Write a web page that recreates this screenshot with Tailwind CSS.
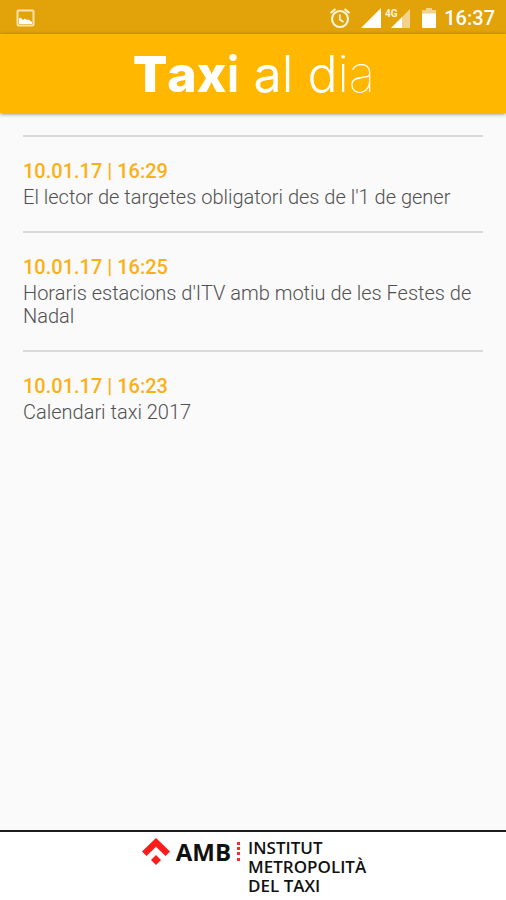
<!DOCTYPE html>
<html lang="ca">
<head>
<meta charset="utf-8">
<meta name="viewport" content="width=device-width, initial-scale=1">
<title>Taxi al dia</title>
<script src="https://cdn.jsdelivr.net/npm/@tailwindcss/browser@4"></script>
</head>
<body class="flex min-h-screen flex-col bg-[#fafafa] font-['Roboto',sans-serif] text-[#505050]">
  <div class="flex h-[34px] items-center justify-between bg-[#e1a20a] pt-px pr-[11px] pl-4 text-white">
    <svg class="h-[18px] w-[19px]" viewBox="0 0 19 18" aria-hidden="true">
      <rect x="1.5" y="1.5" width="16" height="15" rx="1" fill="none" stroke="#fbe3ae" stroke-width="2"/>
      <path d="M3 15V9.500L4.500 8.500L7 11L9 9.500L11 11L12.500 10.500L16 13V15Z" fill="#fff"/>
    </svg>
    <div class="flex items-center">
      <svg class="h-[22px] w-[22px]" viewBox="0 0 22 22" fill="none" stroke="#fff5dc" aria-hidden="true">
        <circle cx="11" cy="12" r="8" stroke-width="2.200"/>
        <path d="M1.500 6L6.500 2M20.500 6L15.500 2" stroke-width="2.200"/>
        <path d="M10.800 7.500V12.500L14.500 15" stroke-width="1.800"/>
      </svg>
      <svg class="ml-2.5 h-5 w-5" viewBox="0 0 20 20" aria-hidden="true"><path d="M0 20L20 0V20Z" fill="#fff"/></svg>
      <svg class="ml-1 h-5 w-[26px]" viewBox="0 0 26 20" aria-hidden="true">
        <path d="M17 9L25 1V20H17Z" fill="#f3d289"/>
        <path d="M6 20L17 9V20Z" fill="#fff"/>
        <text x="0" y="9" font-size="10" font-weight="700" fill="#fff5dc">4G</text>
      </svg>
      <svg class="ml-[11px] h-5 w-[14px]" viewBox="0 0 14 20" aria-hidden="true">
        <path d="M0 6V2H4V0H10V2H14V6Z" fill="#f3d289"/>
        <path d="M0 5.500H14V19Q14 20 13 20H1Q0 20 0 19Z" fill="#fff"/>
      </svg>
      <span class="ml-2 text-[20px] leading-6 font-medium">16:37</span>
    </div>
  </div>
  <header class="flex h-[79px] items-center justify-center bg-[#ffb700] pl-0.5 shadow-[0_1px_4px_rgba(0,0,0,0.45)]">
    <h1 class="font-['Inter',sans-serif] text-[50px] leading-[60px] whitespace-nowrap text-white"><span class="font-black">T</span><span class="font-extrabold">ax</span><span class="font-semibold">i</span> <span class="font-normal">a</span><span class="font-light">l</span> <span class="font-light">d</span><span class="font-extralight">i</span><span class="font-thin">a</span></h1>
  </header>
  <main class="flex-1 px-[23px] pt-[22px] text-[20px] leading-[23px] font-light">
    <article class="border-t-2 border-[#dadada] pt-[23px] pb-[22px]">
      <time class="mb-[3px] block font-medium text-[#fbb017]" datetime="2017-01-10T16:29">10.01.17 | 16:29</time>
      <p>El lector de targetes obligatori des de l'1 de gener</p>
    </article>
    <article class="border-t-2 border-[#dadada] pt-[23px] pb-[22px]">
      <time class="mb-[3px] block font-medium text-[#fbb017]" datetime="2017-01-10T16:25">10.01.17 | 16:25</time>
      <p>Horaris estacions d'ITV amb motiu de les Festes de Nadal</p>
    </article>
    <article class="border-t-2 border-[#dadada] pt-[23px] pb-[22px]">
      <time class="mb-[3px] block font-medium text-[#fbb017]" datetime="2017-01-10T16:23">10.01.17 | 16:23</time>
      <p>Calendari taxi 2017</p>
    </article>
  </main>
  <footer class="flex h-[70px] items-start justify-center border-t-2 border-[#1c1c1c] bg-white pt-[6px] pl-0.5 font-['Open_Sans',sans-serif] text-[#111]">
    <svg class="h-7 w-7" viewBox="0 0 28 28" fill="#fb1d1a" aria-hidden="true">
      <path d="M14 0L28 13.500L23.500 18L14 8.800L4.500 18L0 13.500Z"/>
      <path d="M14 17L19 22L14 27L9 22Z"/>
    </svg>
    <span class="ml-1.5 text-[24px] leading-7 font-bold">AMB</span>
    <svg class="ml-1.5 h-6 w-[3px]" viewBox="0 0 3 24" fill="#f0302e" aria-hidden="true">
      <path d="M0 4H3V7H0ZM0 9H3V12H0ZM0 14H3V17H0ZM0 20H3V23H0Z"/>
    </svg>
    <p class="ml-2 text-[17px] leading-[19px] font-semibold">INSTITUT<br>METROPOLITÀ<br>DEL TAXI</p>
  </footer>
</body>
</html>
